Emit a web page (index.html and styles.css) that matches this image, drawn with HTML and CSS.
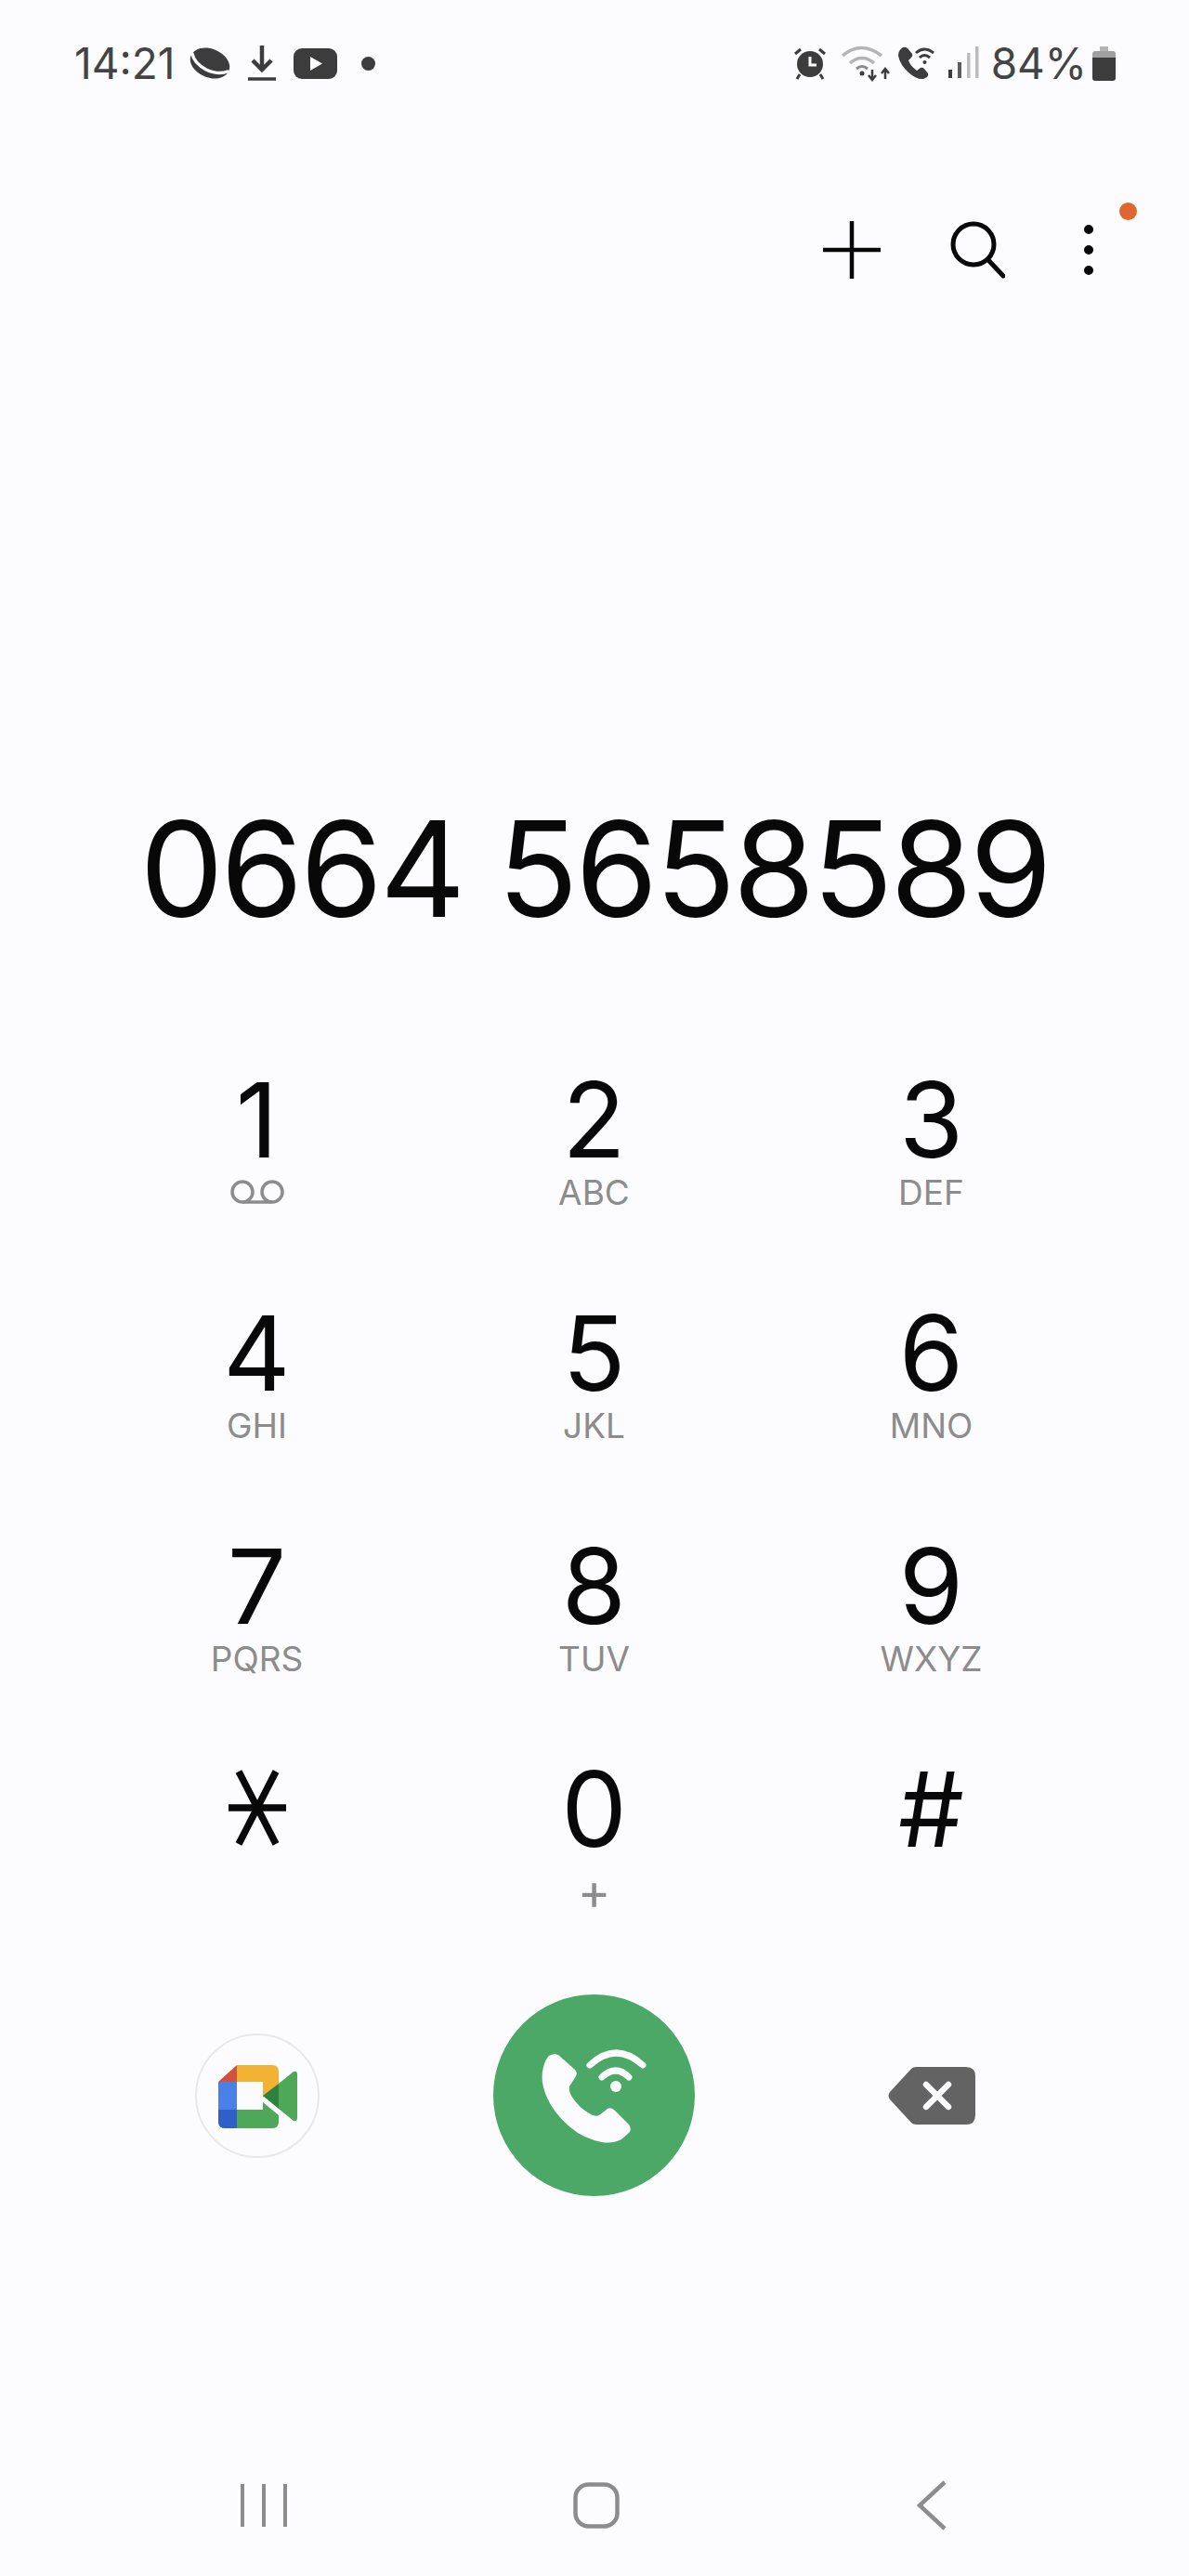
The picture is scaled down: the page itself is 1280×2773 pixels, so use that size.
FILE: index.html
```html
<!DOCTYPE html>
<html lang="en">
<head>
<meta charset="utf-8">
<title>Phone</title>
<link rel="stylesheet" href="styles.css">
</head>
<body>
	<!-- status bar -->
	<div class="status">
		<div class="status_side">
			<span class="clock">14:21</span>
			<svg class="ic_planet" width="46" height="36" viewBox="0 0 46 36"><ellipse cx="23" cy="18" rx="22" ry="15.500" transform="rotate(22 23 18)" fill="#3c3c3c"/><path d="M4 8Q6 18 19 25Q32 31 42 27" fill="none" stroke="#fcfcfe" stroke-width="3.500" stroke-linecap="round"/></svg>
			<svg class="ic_download" width="30" height="40" viewBox="0 0 30 40"><path d="M15 1V24M5 17L15 27L25 17" fill="none" stroke="#3c3c3c" stroke-width="4.500"/><path d="M0 37H30" stroke="#3c3c3c" stroke-width="3.500"/></svg>
			<svg class="ic_youtube" width="47" height="33" viewBox="0 0 47 33"><rect width="47" height="33" rx="9" fill="#3c3c3c"/><path d="M18 9L31 16.500L18 24Z" fill="#fcfcfe"/></svg>
			<span class="status_dot"></span>
		</div>
		<div class="status_side">
			<svg class="ic_alarm" width="36" height="36" viewBox="0 0 36 36"><circle cx="18" cy="19" r="14" fill="#3c3c3c"/><path d="M2 8L8 3M34 8L28 3M7 30L4 35M29 30L32 35" stroke="#3c3c3c" stroke-width="3" fill="none"/><path d="M18 11V20H25" stroke="#fcfcfe" stroke-width="3" fill="none"/></svg>
			<svg class="ic_wifi" width="56" height="40" viewBox="0 0 56 40"><path d="M2 12Q22 -5 44 12" fill="none" stroke="#b4b4b4" stroke-width="3.500"/><path d="M10 20Q23 9 36 20" fill="none" stroke="#b4b4b4" stroke-width="3.500"/><path d="M17 26Q23 21 29 26" fill="none" stroke="#8a8a8a" stroke-width="3"/><circle cx="23" cy="31" r="2.500" fill="#3c3c3c"/><path d="M34 27V38M30 33L34 38L38 33" fill="none" stroke="#3c3c3c" stroke-width="2.500"/><path d="M48 37V26M44 31L48 26L52 31" fill="none" stroke="#3c3c3c" stroke-width="2.500"/></svg>
			<svg class="ic_vowifi" width="40" height="36" viewBox="0 0 40 36"><path d="M5 1Q8 0 10 2L15 8Q16 10 14 12L11 15Q13 21 20 26L24 23Q26 22 28 24L32 29Q33 31 31 33L27 35Q20 36 11 28Q2 20 0 10Q0 4 5 1Z" fill="#3c3c3c"/><path d="M19 7Q28 -1 38 7M23 12Q28 7 34 12" fill="none" stroke="#3c3c3c" stroke-width="3"/><circle cx="28.500" cy="17" r="2" fill="#3c3c3c"/></svg>
			<svg class="ic_signal" width="34" height="36" viewBox="0 0 34 36"><rect x="0" y="25" width="4" height="9" fill="#3c3c3c"/><rect x="10" y="17" width="4" height="17" fill="#5c5c5c"/><rect x="20" y="7" width="3.500" height="27" fill="#bcbcbc"/><rect x="29" y="0" width="3.500" height="34" fill="#bcbcbc"/></svg>
			<span class="battery_pct">84%</span>
			<svg class="ic_battery" width="25" height="37" viewBox="0 0 25 37"><path d="M8 0H17V5H8Z" fill="#b4b4b4"/><path d="M3 5H22Q25 5 25 8V12H0V8Q0 5 3 5Z" fill="#a0a0a0"/><path d="M0 12H25V34Q25 37 22 37H3Q0 37 0 34Z" fill="#3c3c3c"/></svg>
		</div>
	</div>

	<!-- top actions -->
	<div class="toolbar">
		<svg class="ic_plus" width="62" height="62" viewBox="0 0 62 62"><path d="M0 31H62M31 0V62" stroke="#080808" stroke-width="4.500" fill="none" stroke-linecap="round"/></svg>
		<svg class="ic_search" width="60" height="62" viewBox="0 0 60 62"><circle cx="26" cy="25" r="22" stroke="#080808" stroke-width="5" fill="none"/><path d="M42 42L58 59" stroke="#080808" stroke-width="5" stroke-linecap="round"/></svg>
		<div class="more">
			<span class="more_dot"></span><span class="more_dot"></span><span class="more_dot"></span>
			<span class="badge"></span>
		</div>
	</div>

	<div class="number">0664 5658589</div>

	<!-- dial pad -->
	<div class="keys">
		<div class="key"><span class="digit">1</span>
			<svg class="ic_voicemail" width="58" height="28" viewBox="0 0 58 28"><circle cx="13" cy="14" r="11" fill="none" stroke="#8c8c8c" stroke-width="3.500"/><circle cx="45" cy="14" r="11" fill="none" stroke="#8c8c8c" stroke-width="3.500"/><path d="M13 25H45" stroke="#8c8c8c" stroke-width="3.500"/></svg>
		</div>
		<div class="key"><span class="digit">2</span><span class="letters">ABC</span></div>
		<div class="key"><span class="digit">3</span><span class="letters">DEF</span></div>
		<div class="key"><span class="digit">4</span><span class="letters">GHI</span></div>
		<div class="key"><span class="digit">5</span><span class="letters">JKL</span></div>
		<div class="key"><span class="digit">6</span><span class="letters">MNO</span></div>
		<div class="key"><span class="digit">7</span><span class="letters">PQRS</span></div>
		<div class="key"><span class="digit">8</span><span class="letters">TUV</span></div>
		<div class="key"><span class="digit">9</span><span class="letters">WXYZ</span></div>
		<div class="key">
			<svg class="ic_star" width="62" height="84" viewBox="0 0 62 84" aria-label="*"><path d="M0 41H62M11 2L51 80M51 2L11 80" stroke="#080808" stroke-width="7.500" fill="none"/></svg>
		</div>
		<div class="key"><span class="digit">0</span><span class="letters plus">+</span></div>
		<div class="key"><span class="digit">#</span></div>
	</div>

	<!-- call row -->
	<div class="actions">
		<div class="meet">
			<svg width="88" height="70" viewBox="0 0 88 70">
				<path d="M2 20L22 2V20Z" fill="#d2503c"/>
				<path d="M22 2H60Q67 2 67 9V23L50 37V20H22Z" fill="#f2b233"/>
				<rect x="2" y="20" width="20" height="30" fill="#4a80e8"/>
				<path d="M2 50H22V70H9Q2 70 2 63Z" fill="#2f5fc8"/>
				<path d="M22 50H50V42L67 56V63Q67 70 60 70H22Z" fill="#4ea858"/>
				<path d="M50 35L67 22V49Z" fill="#2e8240"/>
				<path d="M67 22L83 9Q87 8 87 12V59Q87 63 83 62L67 49Z" fill="#4ea858"/>
			</svg>
		</div>
		<div class="call">
			<svg width="217" height="217" viewBox="0 0 217 217">
				<path d="M60 66Q65 63 70 65L88 81Q91 84 89 88L82 99Q81 104 84 109Q92 122 105 129Q110 132 114 130L123 123Q126 121 130 124L146 140Q149 144 147 148L138 156Q128 161 117 159Q97 155 83 143Q65 128 57 109Q50 92 54 78Q56 70 60 66Z" fill="#fcfcfe"/>
				<path d="M104 76Q132 50 161 76M117 89Q132 75 146 89" fill="none" stroke="#fcfcfe" stroke-width="7" stroke-linecap="round"/>
				<circle cx="132" cy="99" r="6" fill="#fcfcfe"/>
			</svg>
		</div>
		<div class="del">
			<svg width="96" height="64" viewBox="0 0 96 64"><path d="M31 1H85Q95 1 95 11V53Q95 63 85 63H31Q28 63 26 61L3 36Q0 32 3 28L26 3Q28 1 31 1Z" fill="#636363"/><path d="M42 20L66 44M66 20L42 44" stroke="#fcfcfe" stroke-width="6.500" stroke-linecap="round"/></svg>
		</div>
	</div>

	<!-- nav bar -->
	<div class="actions nav">
		<svg class="nav_recents" width="50" height="50" viewBox="0 0 50 50"><path d="M2 2V48M25 2V48M48 2V48" stroke="#8c8c8c" stroke-width="4"/></svg>
		<svg class="nav_home" width="50" height="50" viewBox="0 0 50 50"><rect x="2.500" y="2.500" width="45" height="45" rx="14" fill="none" stroke="#8c8c8c" stroke-width="4.500"/></svg>
		<svg class="nav_back" width="32" height="54" viewBox="0 0 32 54"><path d="M30 2L3 27L30 52" fill="none" stroke="#8c8c8c" stroke-width="4.500"/></svg>
	</div>
</body>
</html>
```

FILE: styles.css
```css
* {
	box-sizing: border-box;
}

html, body {
	margin: 0;
	padding: 0;
}

body {
	width: 1280px;
	height: 2773px;
	overflow: hidden;
	background-color: #fcfcfe;
	color: #080808;
	font-family: Inter, "Liberation Sans", sans-serif;
	display: flex;
	flex-direction: column;
}

svg {
	display: block;
	flex: none;
}

.status {
	height: 136px;
	padding: 0 79px 0 80px;
	display: flex;
	justify-content: space-between;
	align-items: center;
	color: #444444;
}

.status_side {
	display: flex;
	align-items: center;
}

.clock {
	font-size: 46px;
	line-height: 50px;
}

.ic_planet { margin-left: 15px; }
.ic_download { margin-left: 18px; }
.ic_youtube { margin-left: 19px; }

.status_dot {
	width: 15px;
	height: 15px;
	margin-left: 26px;
	border-radius: 50%;
	background-color: #3c3c3c;
}

.ic_wifi { margin-left: 15px; }
.ic_vowifi { margin-left: 6px; }
.ic_signal { margin-left: 14px; }
.ic_battery { margin-left: 6px; }

.battery_pct {
	margin-left: 12px;
	font-size: 46px;
	line-height: 50px;
}

.toolbar {
	height: 266px;
	padding-right: 103px;
	display: flex;
	justify-content: flex-end;
	align-items: center;
}

.ic_search {
	margin-left: 74px;
}

.more {
	position: relative;
	width: 10px;
	margin-left: 85px;
	display: flex;
	flex-direction: column;
	gap: 12px;
}

.more_dot {
	width: 10px;
	height: 10px;
	border-radius: 50%;
	background-color: #080808;
}

.badge {
	position: absolute;
	left: 38px;
	top: -24px;
	width: 19px;
	height: 19px;
	border-radius: 50%;
	background-color: #e0662f;
}

.number {
	margin: 453px 0 140px;
	font-size: 143px;
	line-height: 160px;
	letter-spacing: -3px;
	text-align: center;
	white-space: nowrap;
}

.keys {
	padding-left: 95px;
	display: grid;
	grid-template-columns: repeat(3, 363px);
	grid-template-rows: 251px 251px 240px 250px;
}

.key {
	display: flex;
	flex-direction: column;
	align-items: center;
}

.digit {
	font-size: 112px;
	line-height: 100px;
}

.letters {
	margin-top: 9px;
	font-size: 37px;
	line-height: 40px;
	color: #8c8c8c;
}

.plus {
	margin-top: 19px;
	font-size: 54px;
}

.ic_voicemail {
	margin-top: 14px;
}

.ic_star {
	margin-top: 8px;
}

.actions {
	height: 217px;
	padding-left: 95px;
	display: grid;
	grid-template-columns: repeat(3, 363px);
	justify-items: center;
	align-items: center;
}

.meet {
	width: 134px;
	height: 134px;
	border: 2px solid #e8e8ea;
	border-radius: 50%;
	display: flex;
	align-items: center;
	justify-content: center;
}

.call {
	width: 217px;
	height: 217px;
	border-radius: 50%;
	background-color: #4ca866;
}

.nav {
	height: 54px;
	margin-top: 306px;
}

.nav_recents { margin-left: 14px; }
.nav_home { margin-left: 4px; }
```
